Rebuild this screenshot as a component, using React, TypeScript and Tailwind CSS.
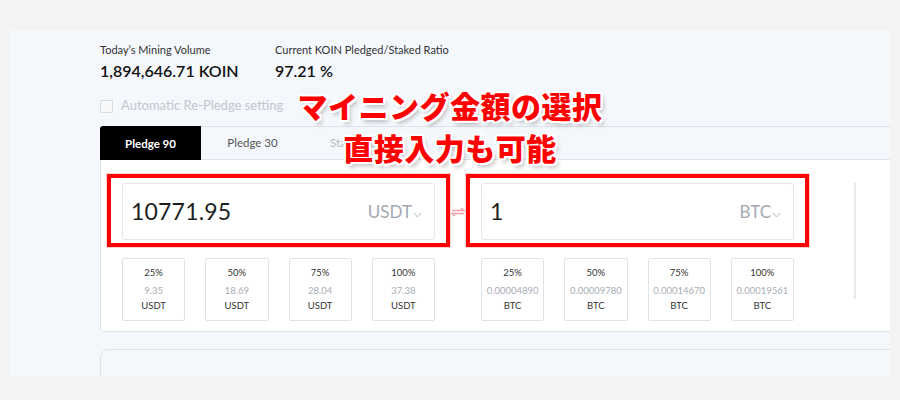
import React from "react";

const usdt = [
  ["25%", "9.35"],
  ["50%", "18.69"],
  ["75%", "28.04"],
  ["100%", "37.38"],
];
const btc = [
  ["25%", "0.00004890"],
  ["50%", "0.00009780"],
  ["75%", "0.00014670"],
  ["100%", "0.00019561"],
];

function Chevron() {
  return (
    <svg width="9" height="6" viewBox="0 0 9 6" className="ml-[1px] mt-[6px]">
      <path d="M1 1 L4.5 5 L8 1" fill="none" stroke="#b4b8c2" strokeWidth="1" />
    </svg>
  );
}

function AmountInput({ value, unit }: { value: string; unit: string }) {
  return (
    <div className="relative w-[313px] h-[57px]">
      <div className="absolute left-[-15px] right-[-15px] top-[-9px] bottom-[-7px] border-[4px] border-[#ff0000] shadow-[0_0_0_1px_rgba(255,120,120,0.35)]" />
      <div className="h-full rounded-[3px] border border-[#e3e6eb] bg-white flex items-center pl-[8px] pr-[12px]">
        <span className="text-[23px] text-[#1e1e1e] tracking-[0.2px]">{value}</span>
        <span className="ml-auto flex items-center text-[17px] text-[#a4a8b3]">
          {unit}
          <Chevron />
        </span>
      </div>
    </div>
  );
}

function PctButtons({ items, unit }: { items: string[][]; unit: string }) {
  return (
    <div className="grid grid-cols-4 gap-x-[20px] w-[313px]">
      {items.map(([p, v]) => (
        <div
          key={p}
          className="h-[63px] rounded-[2px] border border-[#dfe2e7] bg-white flex flex-col items-center pt-[6px] text-[9.5px] leading-[15px]"
        >
          <span className="text-[#333]">{p}</span>
          <span className="text-[#a9adb6] mt-[3px]">{v}</span>
          <span className="text-[#333]">{unit}</span>
        </div>
      ))}
    </div>
  );
}

export default function App() {
  return (
    <div
      className="w-[900px] h-[400px] bg-[#f3f3f3] pt-[30px] pl-[10px]"
      style={{ fontFamily: "Lato, 'Noto Sans', sans-serif" }}
    >
      <div className="relative w-[880px] h-[346px] bg-[#f4f8fd] overflow-hidden pl-[90px] pt-[13px]">
        {/* stats */}
        <div className="flex">
          <div className="w-[175px]">
            <div className="text-[11px] leading-[14px] text-[#333]">Today’s Mining Volume</div>
            <div className="text-[16px] leading-[22px] font-semibold text-[#111] mt-[3px]">1,894,646.71 KOIN</div>
          </div>
          <div>
            <div className="text-[11px] leading-[14px] text-[#333]">Current KOIN Pledged/Staked Ratio</div>
            <div className="text-[16px] leading-[22px] font-semibold text-[#111] mt-[3px]">97.21 %</div>
          </div>
        </div>

        {/* checkbox */}
        <div className="flex items-center mt-[17px] h-[14px]">
          <div className="w-[13px] h-[13px] border border-[#d9dce1] rounded-[1px] bg-[#f7f8fa]" />
          <span className="ml-[8px] text-[13px] text-[#c2c6cd]">Automatic Re-Pledge setting</span>
        </div>

        {/* tabs */}
        <div className="flex mt-[13px] h-[34px] w-[900px]">
          <div className="w-[101px] bg-black text-white text-[11.5px] font-bold flex items-center justify-center pt-[2px] rounded-tl-[3px]">
            Pledge 90
          </div>
          <div className="flex-1 flex border-t border-b border-[#dde3ea] bg-[#f4f8fd]">
            <div className="w-[103px] flex items-center justify-center text-[11.5px] text-[#555]">Pledge 30</div>
            <div className="w-[103px] flex items-center pl-[26px] text-[11.5px] text-[#b6bac1]">Standard</div>
          </div>
        </div>

        {/* card */}
        <div className="w-[900px] h-[172px] bg-white border border-t-0 border-[#dfe3e8] rounded-bl-[5px] pl-[21px] pt-[23px] flex">
          <div className="flex flex-col gap-y-[18px]">
            <div className="flex items-center">
              <AmountInput value="10771.95" unit="USDT" />
              <div className="w-[46px] flex justify-center">
                <svg width="14" height="10" viewBox="0 0 14 10">
                  <path d="M1 3.5 H13 L10 1" fill="none" stroke="#f0a0aa" strokeWidth="1.3" />
                  <path d="M13 6.5 H1 L4 9" fill="none" stroke="#f0a0aa" strokeWidth="1.3" />
                </svg>
              </div>
              <AmountInput value="1" unit="BTC" />
            </div>
            <div className="flex">
              <PctButtons items={usdt} unit="USDT" />
              <div className="w-[46px]" />
              <PctButtons items={btc} unit="BTC" />
            </div>
          </div>
          <div className="ml-[60px] w-[2px] h-[116px] bg-[#e6e8ec]" />
        </div>

        {/* bottom card */}
        <div className="mt-[17px] w-[900px] h-[60px] border border-[#dfe3e8] rounded-tl-[8px] bg-[#f4f8fd]" />

        {/* annotation */}
        <div
          className="absolute left-[280px] top-[54px] w-[320px] text-center text-[#ff0000] font-black text-[30px] leading-[42px] tracking-[0.5px] [text-shadow:2px_0_0_#fff,-2px_0_0_#fff,0_2px_0_#fff,0_-2px_0_#fff,2px_2px_0_#fff,-2px_-2px_0_#fff,2px_-2px_0_#fff,-2px_2px_0_#fff,3px_4px_4px_rgba(0,0,0,0.25)]"
          style={{ fontFamily: "'Noto Sans CJK JP', sans-serif" }}
        >
          <div>マイニング金額の選択</div>
          <div>直接入力も可能</div>
        </div>
      </div>
    </div>
  );
}
